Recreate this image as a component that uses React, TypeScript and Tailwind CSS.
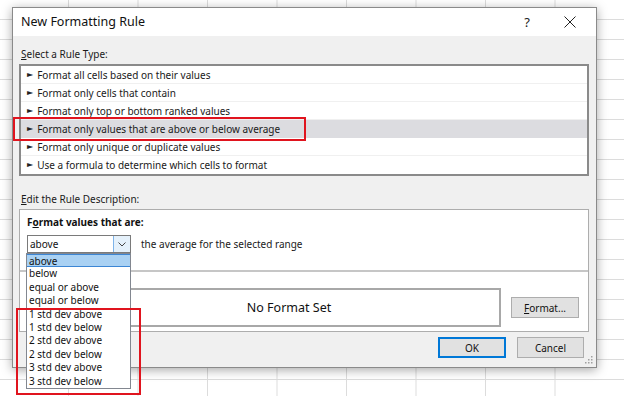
import React from "react";

const rules = [
  "Format all cells based on their values",
  "Format only cells that contain",
  "Format only top or bottom ranked values",
  "Format only values that are above or below average",
  "Format only unique or duplicate values",
  "Use a formula to determine which cells to format",
];

const options = [
  "above",
  "below",
  "equal or above",
  "equal or below",
  "1 std dev above",
  "1 std dev below",
  "2 std dev above",
  "2 std dev below",
  "3 std dev above",
  "3 std dev below",
];

export default function App() {
  return (
    <div className="relative w-[624px] h-[396px] overflow-hidden bg-white bg-[linear-gradient(to_right,#dcdcdc_1px,transparent_1px),linear-gradient(to_bottom,#dcdcdc_1px,transparent_1px)] bg-[length:69.5px_20px] bg-[position:68px_19px] font-['Noto_Sans',sans-serif] text-black">
      {/* Dialog window */}
      <div className="absolute left-[12px] top-[7px] w-[585px] h-[361px] bg-[#f0f0f0] border border-[#8a8a8a] shadow-[0_2px_10px_rgba(0,0,0,0.35)] flex flex-col">
        {/* Title bar */}
        <div className="h-[28px] bg-white flex items-center pl-[8px] pr-[14px]">
          <span className="text-[12.5px] leading-[16px] text-[#111]">New Formatting Rule</span>
          <span className="ml-auto mr-[34px] text-[13px] leading-[16px] text-[#222]">?</span>
          <svg width="12" height="12" viewBox="0 0 12 12" className="mr-[6px]">
            <path d="M0.5 0.5 L11.5 11.5 M11.5 0.5 L0.5 11.5" stroke="#222" strokeWidth="1" fill="none" />
          </svg>
        </div>

        {/* Body */}
        <div className="flex flex-col px-[6px] pt-[10px]">
          <div className="pl-[2px] h-[16px] text-[10px] leading-[16px] text-[#1a1a1a]">
            <span className="underline">S</span>elect a Rule Type:
          </div>
          <div className="mt-[2px] w-[570px] border-2 border-[#8a8a8a] bg-white flex flex-col">
            {rules.map((r, i) => (
              <div
                key={r}
                className={
                  "h-[18px] flex items-center pl-[6px] text-[10px] leading-[18px] text-[#1a1a1a] " +
                  (i === 3 ? "bg-[#dcdce0]" : i < 5 ? "border-b border-[#f0f0f0]" : "")
                }
              >
                <span className="font-['DejaVu_Sans',sans-serif] text-[8px] leading-[18px] mr-[4px] text-[#222]">►</span>
                <span>{r}</span>
              </div>
            ))}
          </div>

          <div className="mt-[15px] pl-[2px] h-[16px] text-[10px] leading-[16px] text-[#1a1a1a]">
            <span className="underline">E</span>dit the Rule Description:
          </div>
          <div className="mt-[2px] w-[570px] h-[123px] border border-[#adadad] bg-white flex flex-col">
            <div className="h-[62px] border-b-2 border-[#c6c6c6] pl-[7px] pt-[4px] flex flex-col">
              <div className="h-[16px] text-[10px] leading-[16px] font-bold text-[#111]">
                F<span className="underline">o</span>rmat values that are:
              </div>
              <div className="mt-[5px] flex items-center">
                <div className="w-[104px] h-[18px] border border-[#7a7a7a] bg-white flex items-center">
                  <span className="pl-[2px] text-[10px] leading-[16px] text-[#111]">above</span>
                  <div className="ml-auto w-[17px] h-[16px] bg-[#e5f1fb] border-l border-[#7eb4ea] flex items-center justify-center">
                    <svg width="8" height="5" viewBox="0 0 8 5">
                      <path d="M0.5 0.5 L4 4 L7.5 0.5" stroke="#444" strokeWidth="1" fill="none" />
                    </svg>
                  </div>
                </div>
                <span className="ml-[10px] text-[10px] leading-[16px] text-[#1a1a1a]">
                  the average for the selected range
                </span>
              </div>
            </div>
            <div className="flex items-start pl-[57px] pt-[16px]">
              <div className="w-[424px] h-[39px] border-2 border-[#a8a8a8] flex items-center justify-center">
                <span className="text-[12.5px] leading-[18px] text-[#111]">No Format Set</span>
              </div>
              <div className="ml-[10px] mt-[9px] w-[68px] h-[21px] bg-[#e1e1e1] border border-[#adadad] flex items-center justify-center text-[10px] leading-[16px] text-[#111]">
                <span className="underline">F</span>ormat...
              </div>
            </div>
          </div>

          <div className="mt-[5px] flex justify-end pr-[6px] gap-[11px]">
            <div className="w-[68px] h-[21px] bg-[#e1e1e1] border-2 border-[#0078d7] flex items-center justify-center text-[10px] leading-[16px] text-[#111]">
              OK
            </div>
            <div className="w-[67px] h-[21px] bg-[#e1e1e1] border border-[#adadad] flex items-center justify-center text-[10px] leading-[16px] text-[#111]">
              Cancel
            </div>
          </div>
        </div>

        {/* resize grip */}
        <svg width="8" height="8" viewBox="0 0 8 8" className="absolute right-[3px] bottom-[3px]">
          <rect x="6" y="0" width="1.5" height="1.5" fill="#a0a0a0" />
          <rect x="3" y="3" width="1.5" height="1.5" fill="#a0a0a0" />
          <rect x="6" y="3" width="1.5" height="1.5" fill="#a0a0a0" />
          <rect x="0" y="6" width="1.5" height="1.5" fill="#a0a0a0" />
          <rect x="3" y="6" width="1.5" height="1.5" fill="#a0a0a0" />
          <rect x="6" y="6" width="1.5" height="1.5" fill="#a0a0a0" />
        </svg>
      </div>

      {/* Dropdown list */}
      <div className="absolute left-[26px] top-[253px] w-[105px] h-[136px] bg-white border border-[#828790] flex flex-col">
        {options.map((o, i) => (
          <div
            key={o}
            className={
              "h-[13.4px] pl-[2px] text-[10px] leading-[13.4px] text-[#111] whitespace-nowrap " +
              (i === 0 ? "bg-[#a9d1f3] border-y border-[#3c86d4] leading-[11.4px]" : "")
            }
          >
            {o}
          </div>
        ))}
      </div>

      {/* Red annotation boxes */}
      <div className="absolute left-[13px] top-[117px] w-[293px] h-[24px] border-2 border-[#e0141e]" />
      <div className="absolute left-[16px] top-[308px] w-[125px] h-[87px] border-2 border-[#e0141e]" />
    </div>
  );
}
